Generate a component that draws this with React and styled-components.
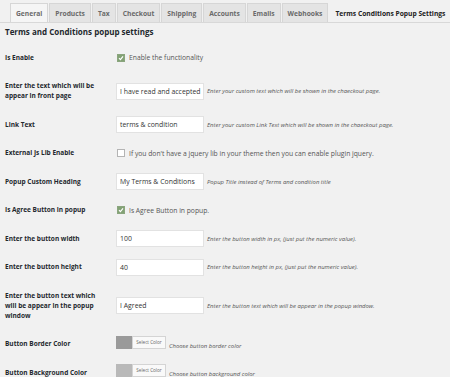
import React from "react"
import styled, { createGlobalStyle } from "styled-components"

const Global = createGlobalStyle`
  html, body { margin: 0; padding: 0; background: #f1f1f1; }
  body { font-family: "Open Sans", "Liberation Sans", sans-serif; color: #222; }
`

const Page = styled.div`
  width: 450px;
  height: 377px;
  overflow: hidden;
  background: #f1f1f1;
`

const Tabs = styled.div`
  display: flex;
  gap: 1px;
  padding: 3px 0 0 10px;
  border-bottom: 1px solid #d8d8d8;
  height: 19px;
`

const Tab = styled.div`
  padding: 0 5px;
  height: 19px;
  line-height: 19px;
  font-size: 6.7px;
  font-weight: 700;
  white-space: nowrap;
  color: ${p => p.$active ? '#222' : '#6a6a6a'};
  background: ${p => p.$light ? '#f5f5f5' : p.$active ? '#f1f1f1' : '#e4e4e4'};
  border: 1px solid ${p => p.$active ? '#f1f1f1' : '#d6d6d6'};
  border-bottom: none;
  box-sizing: border-box;
`

const Title = styled.h2`
  margin: 0;
  padding: 3px 0 0 5px;
  height: 17.5px;
  font-size: 8px;
  line-height: 12px;
  font-weight: 700;
  color: #23282d;
`

const Table = styled.div`
  display: grid;
  grid-template-columns: 111px 1fr;
  padding-left: 5px;
`

const Label = styled.div`
  font-size: 6.5px;
  font-weight: 700;
  line-height: 10px;
  color: #23282d;
  padding: 9.25px 8px 9.25px 0;
  display: flex;
  align-items: center;
`

const Field = styled.div`
  display: flex;
  align-items: ${p => p.$low ? 'flex-end' : 'center'};
  gap: 3px;
  min-width: 0;
`

const Input = styled.div`
  width: 88px;
  height: 17px;
  flex: none;
  box-sizing: border-box;
  background: #fff;
  border: 1px solid #e2e2e2;
  padding-left: 3px;
  font-size: 6.9px;
  line-height: 15px;
  color: #333;
  white-space: nowrap;
  overflow: hidden;
`

const Desc = styled.span`
  font-size: 5.95px;
  font-style: italic;
  color: #555;
  white-space: nowrap;
  padding-bottom: ${p => p.$low ? '9px' : '0'};
`

const CheckWrap = styled.div`
  display: flex;
  align-items: center;
  gap: 4px;
  padding-left: 1px;
  font-size: 6.75px;
  color: #555;
  white-space: nowrap;
`

const Box = styled.span`
  width: 8px;
  height: 8px;
  box-sizing: border-box;
  border: 1px solid ${p => p.$checked ? '#8aa57e' : '#b4b4b4'};
  background: ${p => p.$checked ? '#83a275' : '#fff'};
  display: inline-flex;
  align-items: center;
  justify-content: center;
`

const Picker = styled.div`
  display: flex;
  height: 13px;
  flex: none;
  margin-bottom: 10px;
`

const Swatch = styled.span`
  width: 16px;
  height: 13px;
  background: ${p => p.$color};
`

const PickBtn = styled.span`
  width: 34px;
  box-sizing: border-box;
  border: 1px solid #d4d4d4;
  background: #f9f9f9;
  font-size: 4.6px;
  line-height: 11px;
  color: #666;
  text-align: center;
  white-space: nowrap;
`

const Check = ({ checked, children }) => (
  <CheckWrap>
    <Box $checked={checked}>
      {checked && <svg width="6" height="6" viewBox="0 0 6 6"><path d="M1 3.2 L2.4 4.6 L5 1.4" stroke="#fff" strokeWidth="1.2" fill="none" /></svg>}
    </Box>
    {children}
  </CheckWrap>
)

const tabs = [
  { name: 'General', light: true },
  { name: 'Products' },
  { name: 'Tax' },
  { name: 'Checkout' },
  { name: 'Shipping' },
  { name: 'Accounts' },
  { name: 'Emails' },
  { name: 'Webhooks' },
  { name: 'Terms Conditions Popup Settings', active: true },
]

const Row = ({ label, children, low }) => (
  <>
    <Label>{label}</Label>
    <Field $low={low}>{children}</Field>
  </>
)

export default function App() {
  return (
    <Page>
      <Global />
      <Tabs>
        {tabs.map(t => <Tab key={t.name} $active={t.active} $light={t.light}>{t.name}</Tab>)}
      </Tabs>
      <Title>Terms and Conditions popup settings</Title>
      <Table>
        <Row label="Is Enable"><Check checked>Enable the functionality</Check></Row>
        <Row label={<span>Enter the text which will be<br />appear in front page</span>}>
          <Input>I have read and accepted</Input>
          <Desc>Enter your custom text which will be shown in the chaeckout page.</Desc>
        </Row>
        <Row label="Link Text">
          <Input>terms &amp; condition</Input>
          <Desc>Enter your custom Link Text which will be shown in the chaeckout page.</Desc>
        </Row>
        <Row label="External Js Lib Enable">
          <Check>If you don't have a jquery lib in your theme then you can enable plugin jquery.</Check>
        </Row>
        <Row label="Popup Custom Heading">
          <Input>My Terms &amp; Conditions</Input>
          <Desc>Popup Title instead of Terms and condition title</Desc>
        </Row>
        <Row label="Is Agree Button in popup"><Check checked>Is Agree Button in popup.</Check></Row>
        <Row label="Enter the button width">
          <Input>100</Input>
          <Desc>Enter the button width in px, (just put the numeric value).</Desc>
        </Row>
        <Row label="Enter the button height">
          <Input>40</Input>
          <Desc>Enter the button height in px, (just put the numeric value).</Desc>
        </Row>
        <Row label={<span>Enter the button text which<br />will be appear in the popup<br />window</span>}>
          <Input>I Agreed</Input>
          <Desc>Enter the button text which will be appear in the popup window.</Desc>
        </Row>
        <Row label="Button Border Color" low>
          <Picker><Swatch $color="#9a9a9a" /><PickBtn>Select Color</PickBtn></Picker>
          <Desc $low>Choose button border color</Desc>
        </Row>
        <Row label="Button Background Color" low>
          <Picker><Swatch $color="#b9b9b9" /><PickBtn>Select Color</PickBtn></Picker>
          <Desc $low>Choose button background color</Desc>
        </Row>
      </Table>
    </Page>
  )
}
